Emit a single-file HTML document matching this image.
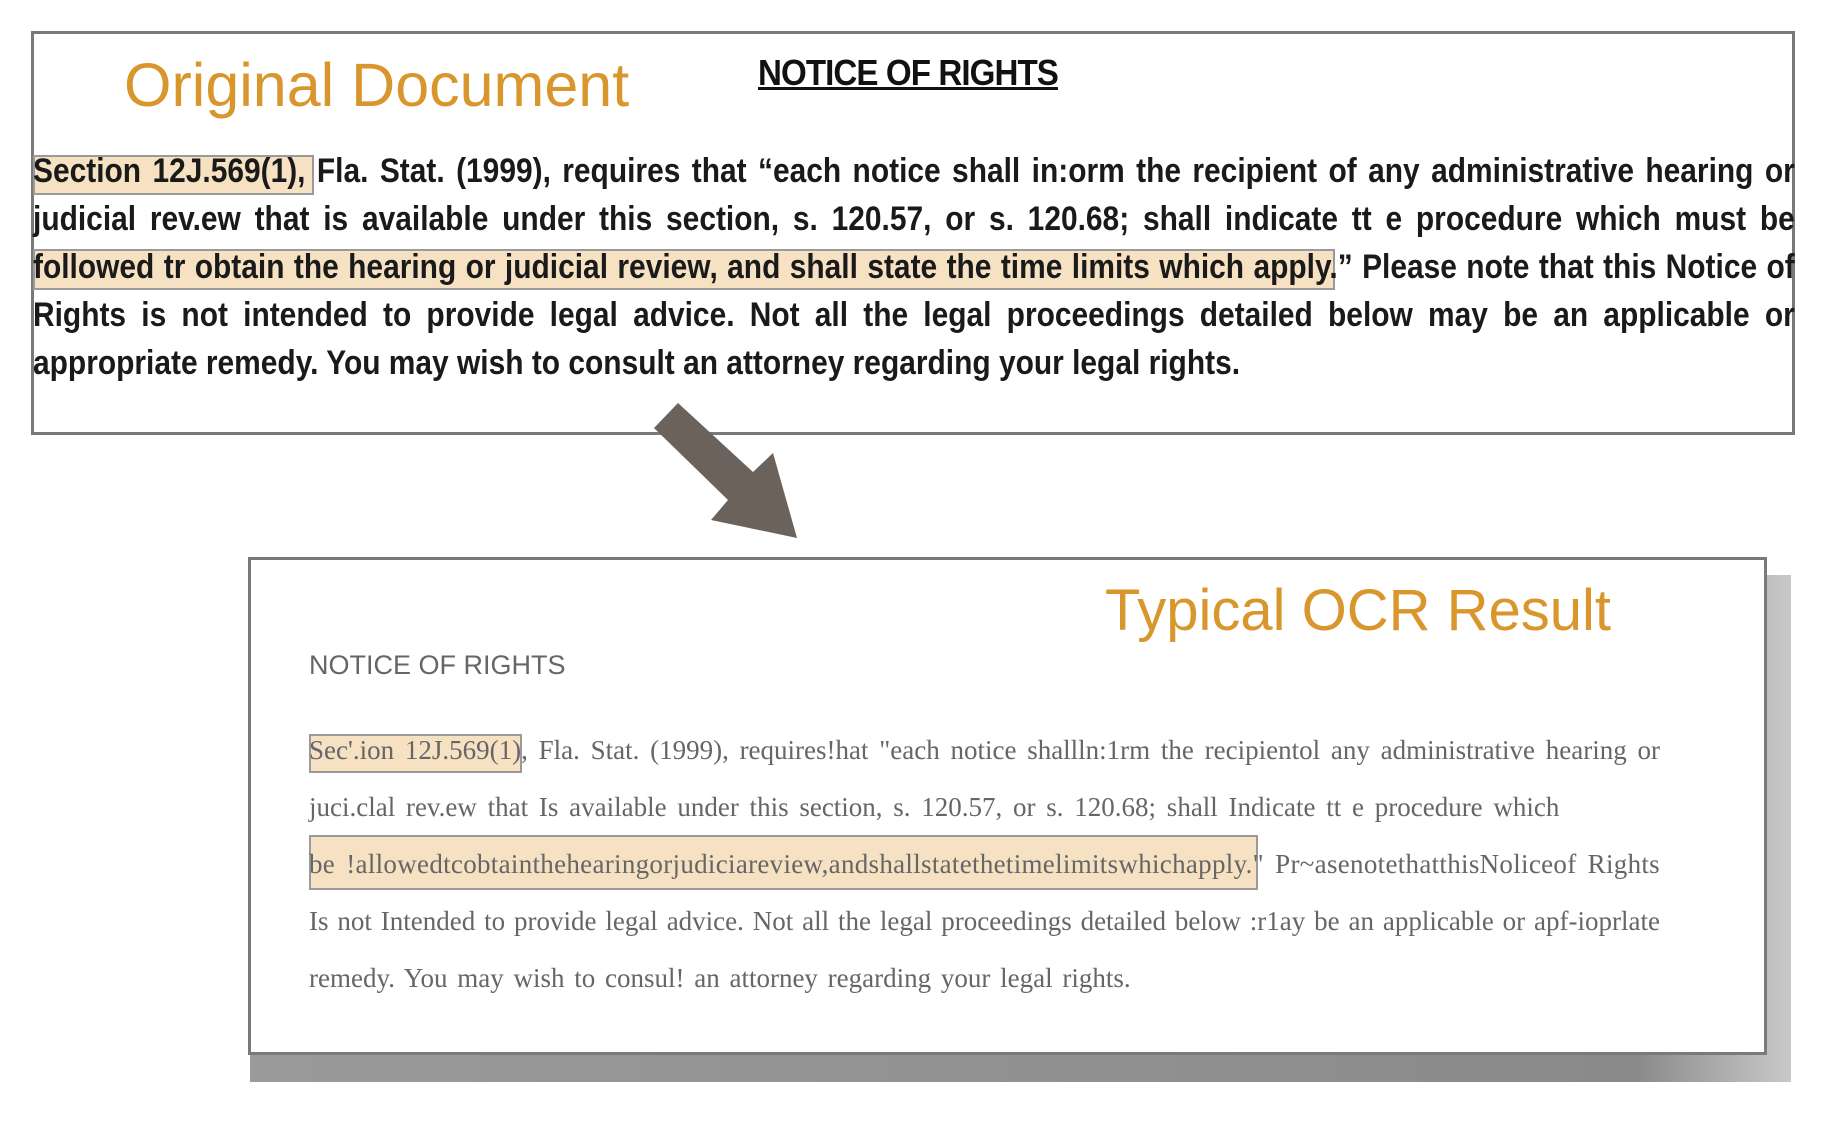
<!DOCTYPE html>
<html><head><meta charset="utf-8"><style>
body{margin:0;width:1824px;height:1121px;background:#fff;position:relative;overflow:hidden;font-family:"Liberation Sans",sans-serif}
.a{position:absolute;white-space:nowrap}
.box1{position:absolute;left:31px;top:31px;width:1758px;height:398px;border:3px solid #7a7a7a;background:#fff}
.shadow{position:absolute;left:250px;top:575px;width:1541px;height:507px;background:linear-gradient(90deg,#9a9a9a,#8a8a8a 90%,#c8c8c8)}
.box2{position:absolute;left:248px;top:557px;width:1513px;height:492px;border:3px solid #7a7a7a;background:#fff}
.title{color:#D8962C;font-size:61px}
.orig{font-size:34px;color:#1a1a1a;font-weight:bold;transform:scaleX(0.88);transform-origin:0 0;width:2002px;text-align:justify;text-align-last:justify;white-space:nowrap}
.hl{position:absolute;background:#F6E2C2;border:2px solid #9a9a9a}
.ocr{font-family:"Liberation Serif",serif;font-size:27px;color:#666}
.j{width:1351px;text-align:justify;text-align-last:justify}
</style></head><body>
<div class="box1"></div>
<div class="hl" style="left:33px;top:155px;width:277px;height:36px"></div>
<div class="hl" style="left:33px;top:249px;width:1298px;height:37px"></div>
<div class="a title" style="left:124px;top:50px">Original Document</div>
<div class="a" style="left:758px;top:52px;font-size:36px;font-weight:bold;text-decoration:underline;letter-spacing:-1px;color:#111;transform:scaleX(0.92);transform-origin:0 0">NOTICE OF RIGHTS</div>
<div class="a orig" style="left:33px;top:152px">Section 12J.569(1), Fla. Stat. (1999), requires that “each notice shall in:orm the recipient of any administrative hearing or</div>
<div class="a orig" style="left:33px;top:200px">judicial rev.ew that is available under this section, s. 120.57, or s. 120.68; shall indicate tt e procedure which must be</div>
<div class="a orig" style="left:33px;top:248px">followed tr obtain the hearing or judicial review, and shall state the time limits which apply.”  Please note that this Notice of</div>
<div class="a orig" style="left:33px;top:296px">Rights is not intended to provide legal advice. Not all the legal proceedings detailed below may be an applicable or</div>
<div class="a orig" style="left:33px;top:344px;width:auto;text-align-last:auto">appropriate remedy. You may wish to consult an attorney regarding your legal rights.</div>
<div class="shadow"></div>
<div class="box2"></div>
<svg class="a" style="left:0;top:0" width="1824" height="1121"><polygon points="654,428 678,403 753,472 773,453 797,538 711,520 728,500" fill="#6B625C"/></svg>
<div class="a title" style="left:1105px;top:577px;font-size:58px">Typical OCR Result</div>
<div class="a" style="left:309px;top:650px;font-size:27px;color:#666">NOTICE OF RIGHTS</div>
<div class="hl" style="left:309px;top:734px;width:209px;height:35px"></div>
<div class="hl" style="left:309px;top:835px;width:945px;height:51px"></div>
<div class="a ocr j" style="left:309px;top:735px">Sec'.ion 12J.569(1), Fla. Stat. (1999), requires!hat "each notice shallln:1rm the recipientol any administrative hearing or</div>
<div class="a ocr" style="left:309px;top:792px;word-spacing:4px">juci.clal rev.ew that Is available under this section, s. 120.57, or s. 120.68; shall Indicate tt e procedure which</div>
<div class="a ocr j" style="left:309px;top:849px;letter-spacing:0.3px">be !allowedtcobtainthehearingorjudiciareview,andshallstatethetimelimitswhichapply." Pr~asenotethatthisNoliceof Rights</div>
<div class="a ocr j" style="left:309px;top:906px">Is not Intended to provide legal advice. Not all the legal proceedings detailed below :r1ay be an applicable or apf-ioprlate</div>
<div class="a ocr" style="left:309px;top:963px;word-spacing:3px">remedy. You may wish to consul! an attorney regarding your legal rights.</div>
</body></html>
